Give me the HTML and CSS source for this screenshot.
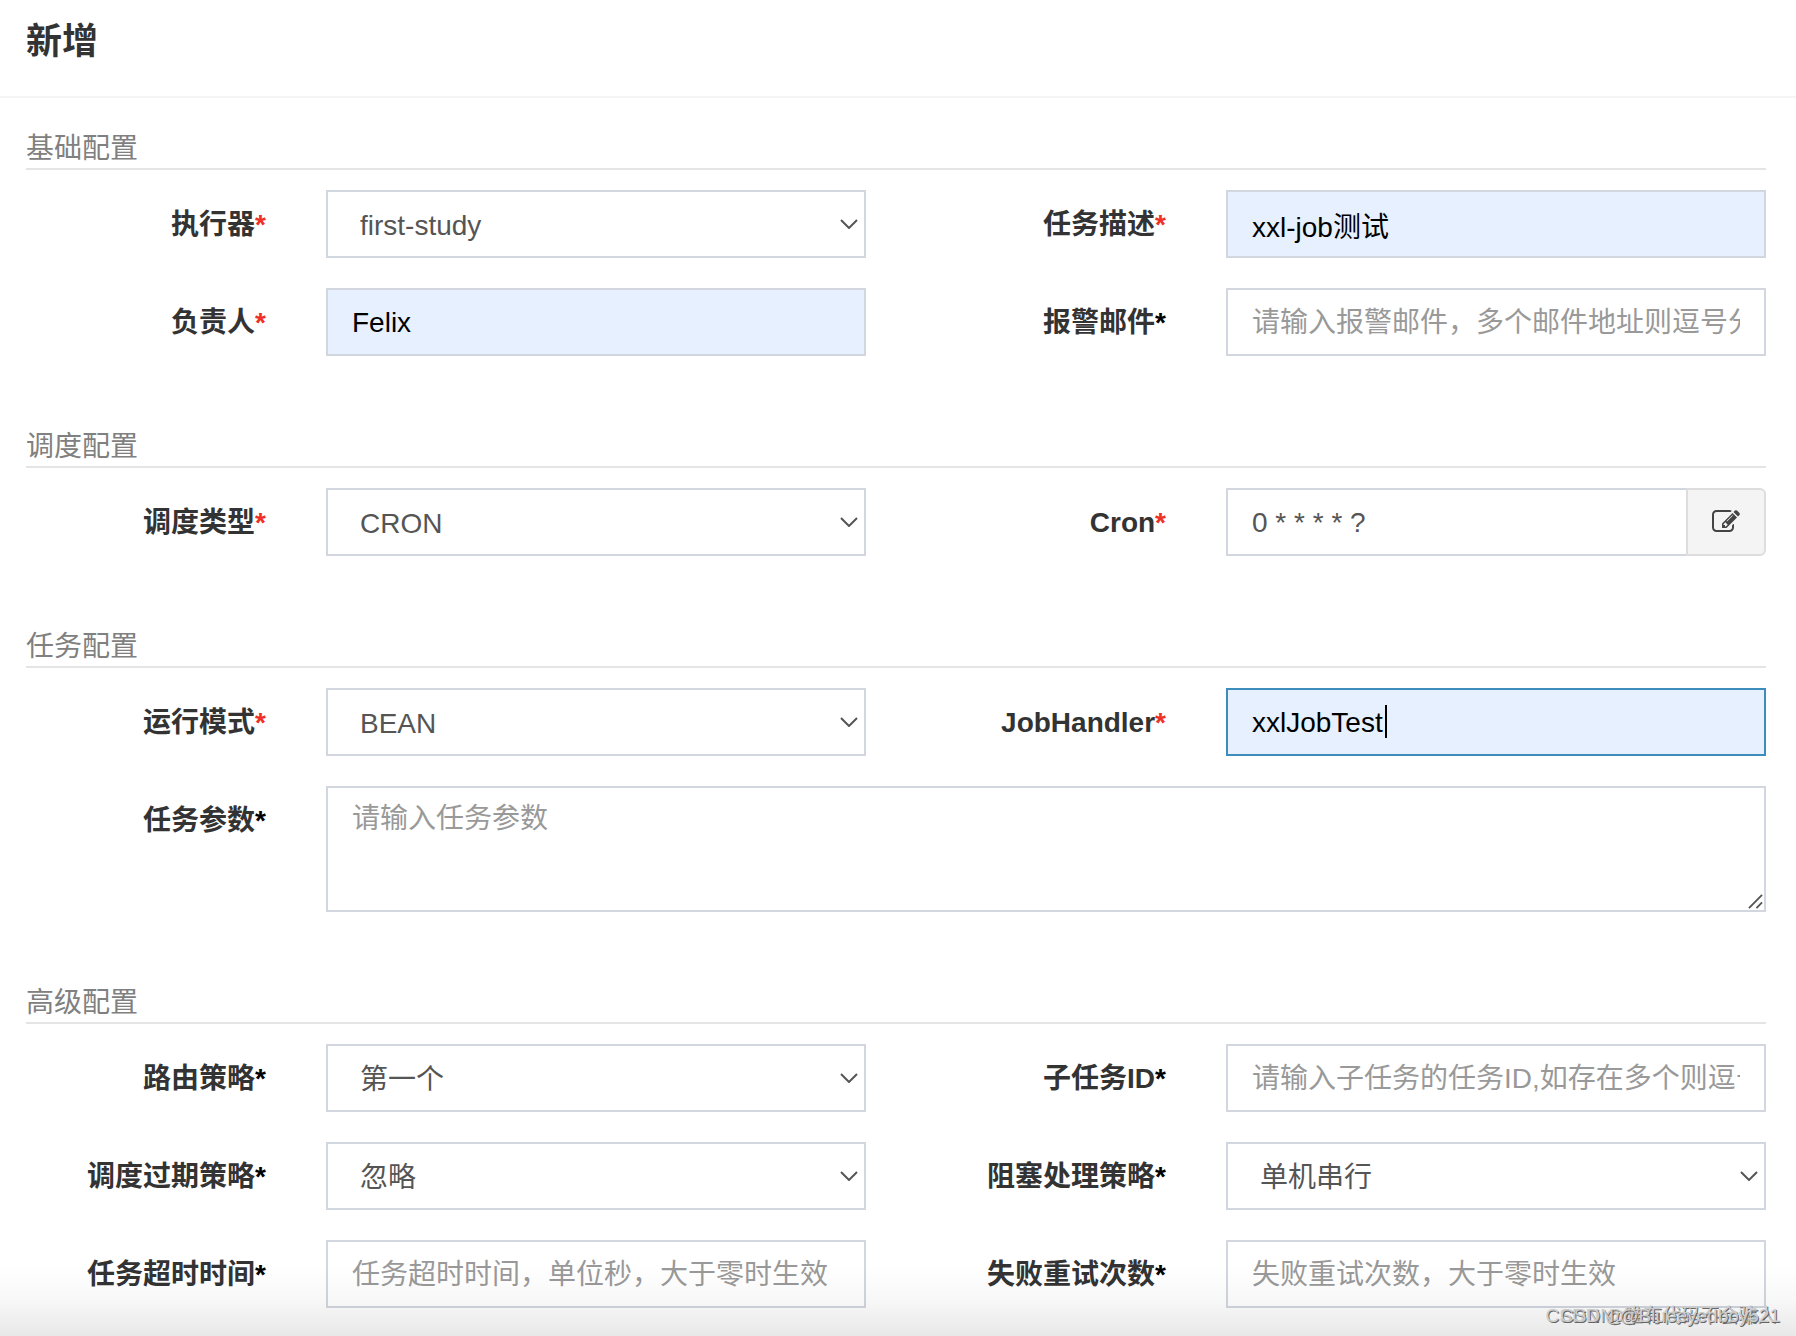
FILE: index.html
```html
<!DOCTYPE html>
<html lang="zh-CN">
<head>
<meta charset="utf-8">
<meta name="viewport" content="width=device-width, initial-scale=1">
<title>新增</title>
<link rel="stylesheet" href="styles.css">
</head>
<body>
<main class="dialog">
  <header class="dialog-header"><h1 class="dialog-title">新增</h1></header>
  <form class="dialog-body">
    <section class="group">
      <h2 class="group-title">基础配置</h2>
      <div class="row">
        <label class="label" for="executor">执行器<span class="required">*</span></label>
        <div class="field"><select class="control select" id="executor"><option>first-study</option></select></div>
        <label class="label" for="desc">任务描述<span class="required">*</span></label>
        <div class="field"><input class="control filled" id="desc" type="text" value="xxl-job测试"></div>
      </div>
      <div class="row">
        <label class="label" for="owner">负责人<span class="required">*</span></label>
        <div class="field"><input class="control filled" id="owner" type="text" value="Felix"></div>
        <label class="label" for="email">报警邮件<span class="optional">*</span></label>
        <div class="field"><input class="control" id="email" type="text" placeholder="请输入报警邮件，多个邮件地址则逗号分隔"></div>
      </div>
    </section>

    <section class="group">
      <h2 class="group-title">调度配置</h2>
      <div class="row">
        <label class="label" for="schedule">调度类型<span class="required">*</span></label>
        <div class="field"><select class="control select" id="schedule"><option>CRON</option></select></div>
        <label class="label" for="cron">Cron<span class="required">*</span></label>
        <div class="field input-group">
          <input class="control" id="cron" type="text" value="0 * * * * ?">
          <button class="addon" type="button" aria-label="编辑 Cron">
            <svg class="addon-icon" viewBox="0 0 1792 1792" aria-hidden="true"><path d="M888 1184l116-116-152-152-116 116v56h96v96h56zm440-720q-16-16-33 1l-350 350q-17 17-1 33t33-1l350-350q17-17 1-33zm80 594v190q0 119-84.500 203.500t-203.500 84.500h-832q-119 0-203.500-84.500t-84.500-203.500v-832q0-119 84.500-203.500t203.500-84.500h832q63 0 117 25 15 7 18 23 3 17-9 29l-49 49q-14 14-32 8-23-6-45-6h-832q-66 0-113 47t-47 113v832q0 66 47 113t113 47h832q66 0 113-47t47-113v-126q0-13 9-22l64-64q15-15 35-7t20 29zm-96-738l288 288-672 672h-288v-288zm444 132l-92 92-288-288 92-92q28-28 68-28t68 28l152 152q28 28 28 68t-28 68z"/></svg>
          </button>
        </div>
      </div>
    </section>

    <section class="group">
      <h2 class="group-title">任务配置</h2>
      <div class="row">
        <label class="label" for="mode">运行模式<span class="required">*</span></label>
        <div class="field"><select class="control select" id="mode"><option>BEAN</option></select></div>
        <label class="label" for="handler">JobHandler<span class="required">*</span></label>
        <div class="field"><input class="control filled active" id="handler" type="text" value="xxlJobTest"><span class="caret"></span></div>
      </div>
      <div class="row">
        <label class="label" for="param">任务参数<span class="optional">*</span></label>
        <div class="field wide">
          <textarea class="control textarea" id="param" placeholder="请输入任务参数"></textarea>
          <svg class="grip" viewBox="0 0 16 16" aria-hidden="true"><path d="M1 15 15 1M9 15l6-6"/></svg>
        </div>
      </div>
    </section>

    <section class="group">
      <h2 class="group-title">高级配置</h2>
      <div class="row">
        <label class="label" for="route">路由策略<span class="optional">*</span></label>
        <div class="field"><select class="control select" id="route"><option>第一个</option></select></div>
        <label class="label" for="child">子任务ID<span class="optional">*</span></label>
        <div class="field"><input class="control" id="child" type="text" placeholder="请输入子任务的任务ID,如存在多个则逗号分隔"></div>
      </div>
      <div class="row">
        <label class="label" for="misfire">调度过期策略<span class="optional">*</span></label>
        <div class="field"><select class="control select" id="misfire"><option>忽略</option></select></div>
        <label class="label" for="block">阻塞处理策略<span class="optional">*</span></label>
        <div class="field"><select class="control select" id="block"><option>单机串行</option></select></div>
      </div>
      <div class="row">
        <label class="label" for="timeout">任务超时时间<span class="optional">*</span></label>
        <div class="field"><input class="control" id="timeout" type="text" placeholder="任务超时时间，单位秒，大于零时生效"></div>
        <label class="label" for="retry">失败重试次数<span class="optional">*</span></label>
        <div class="field"><input class="control" id="retry" type="text" placeholder="失败重试次数，大于零时生效"></div>
      </div>
    </section>
  </form>
  <div class="shade"></div>
  <span class="mark mark-back">CSDN @唯有代码不会骗人</span>
  <span class="mark mark-front">CSDN @Blueeyedboy521</span>
</main>
</body>
</html>
```
FILE: styles.css
```css
* { box-sizing: border-box; }

body {
  margin: 0;
  background: #fff;
  color: #333;
  font: 28px/40px "Liberation Sans", "Noto Sans CJK SC", sans-serif;
}

.dialog { position: relative; overflow: hidden; }

.dialog-header {
  padding: 17px 26px 29px;
  border-bottom: 2px solid #f4f4f4;
}

.dialog-title {
  margin: 0;
  font-size: 36px;
  line-height: 50px;
  font-weight: 700;
}

.dialog-body {
  display: flex;
  flex-direction: column;
  gap: 72px;
  padding: 32px 30px 28px 26px;
}

.group { display: flex; flex-direction: column; gap: 30px; }

.group-title {
  margin: 0 0 -10px;
  border-bottom: 2px solid #e5e5e5;
  color: #808080;
  font-size: 28px;
  line-height: 38px;
  font-weight: 400;
}

.row {
  display: grid;
  grid-template-columns: 2fr 4fr 2fr 4fr;
  margin: 0 -30px;
}

.label {
  padding: 15px 30px 0;
  text-align: right;
  font-weight: 700;
  white-space: nowrap;
}

.required { color: #ee3124; }
.optional { color: #000; }

.field { position: relative; min-width: 0; padding: 0 30px; }
.wide { grid-column: span 3; }

.control {
  display: block;
  width: 100%;
  min-width: 0;
  height: 68px;
  margin: 0;
  padding: 13px 24px 11px;
  border: 2px solid #d2d6de;
  border-radius: 0;
  outline: 0;
  background: #fff;
  color: #555;
  font: inherit;
}

.control::placeholder { color: #999; opacity: 1; }

.select {
  appearance: none;
  padding: 14px 48px 10px 32px;
  background: #fff url("data:image/svg+xml,%3Csvg xmlns='http://www.w3.org/2000/svg' width='18' height='10' viewBox='0 0 18 10'%3E%3Cpath d='M1 1l8 8 8-8' fill='none' stroke='%23555' stroke-width='2'/%3E%3C/svg%3E") no-repeat right 6px center;
}

.filled { background: #e6f0ff; color: #000; }
.active { border-color: #3c8dbc; }

.caret {
  position: absolute;
  top: 17px;
  left: 189px;
  width: 2px;
  height: 33px;
  background: #000;
}

.textarea { height: 126px; resize: none; padding: 11px 24px; }

.grip {
  position: absolute;
  right: 33px;
  bottom: 3px;
  width: 15px;
  height: 15px;
  fill: none;
  stroke: #555;
  stroke-width: 2;
}

.input-group { display: flex; }
.input-group .control { flex: 1; border-right: 0; }

.addon {
  display: flex;
  align-items: center;
  justify-content: center;
  width: 80px;
  padding: 0;
  border: 2px solid #ddd;
  border-radius: 0 6px 6px 0;
  background: #f4f4f4;
  color: #444;
}

.addon-icon { width: 28px; height: 28px; fill: currentColor; }

.shade {
  position: absolute;
  inset: auto 0 0;
  height: 70px;
  background: linear-gradient(rgba(0, 0, 0, 0), rgba(0, 0, 0, .03) 50%, rgba(0, 0, 0, .09));
  pointer-events: none;
}

.mark {
  position: absolute;
  bottom: 8px;
  color: #ccc;
  font-size: 19px;
  line-height: 24px;
  white-space: nowrap;
  text-shadow: 1px 1px 0 #666;
}

.mark-back { right: 20px; }
.mark-front { right: 16px; }
```
